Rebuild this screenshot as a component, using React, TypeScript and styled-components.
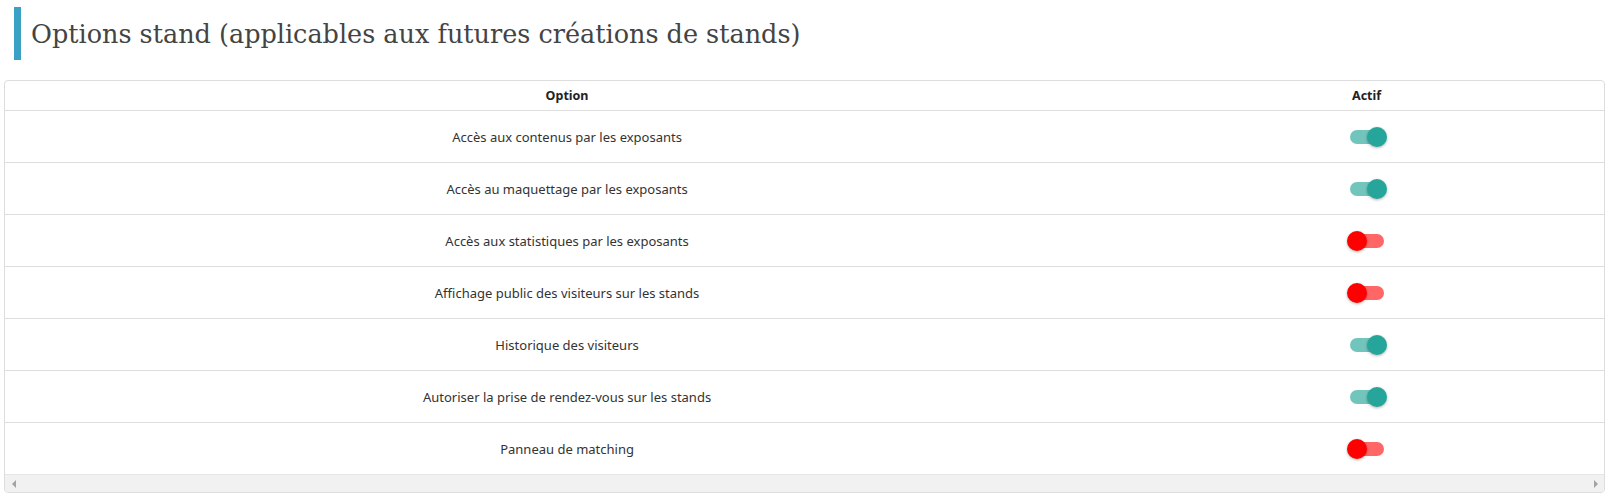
import React from 'react';
import styled, { createGlobalStyle } from 'styled-components';

const GlobalStyle = createGlobalStyle`
  html, body {
    margin: 0;
    padding: 0;
    background: #ffffff;
  }
  body {
    font-family: 'Noto Sans', 'Open Sans', sans-serif;
    color: #333333;
  }
`;

const Page = styled.div`
  padding: 7px 9px 0 4px;
  width: 1614px;
  box-sizing: border-box;
`;

const TitleBar = styled.div`
  display: flex;
  align-items: center;
  height: 53px;
  margin-left: 10px;
  border-left: 7px solid #3aa0c4;
  padding-left: 10px;
  margin-bottom: 20px;
`;

const Title = styled.h1`
  margin: 0;
  font-family: 'DejaVu Serif', 'Liberation Serif', serif;
  font-weight: 300;
  font-size: 25.5px;
  color: #444444;
  white-space: nowrap;
`;

const TableBox = styled.div`
  border: 1px solid #dddddd;
  border-radius: 4px;
  overflow: hidden;
  background: #ffffff;
`;

const Table = styled.table`
  width: 100%;
  border-collapse: collapse;
  table-layout: fixed;
`;

const HeadCell = styled.th<{ $width?: string }>`
  width: ${p => p.$width || 'auto'};
  height: 29px;
  padding: 0;
  font-size: 12.5px;
  font-weight: 700;
  color: #222222;
  text-align: center;
  border-bottom: 1px solid #dddddd;
`;

const Row = styled.tr`
  & + & td {
    border-top: 1px solid #dddddd;
  }
`;

const Cell = styled.td`
  height: 51px;
  padding: 0;
  font-size: 13px;
  text-align: center;
  vertical-align: middle;
  color: #333333;
`;

const Switch = styled.span<{ $on: boolean }>`
  position: relative;
  display: block;
  margin: 0 auto;
  width: 34px;
  height: 14px;
  border-radius: 7px;
  background: ${p => (p.$on ? 'rgba(38, 166, 154, 0.65)' : 'rgba(255, 0, 0, 0.6)')};

  &::after {
    content: '';
    position: absolute;
    top: -3px;
    left: ${p => (p.$on ? '17px' : '-3px')};
    width: 20px;
    height: 20px;
    border-radius: 50%;
    background: ${p => (p.$on ? '#26a69a' : '#ff0000')};
    box-shadow: 0 1px 3px rgba(0, 0, 0, 0.3);
  }
`;

const Scrollbar = styled.div`
  display: flex;
  align-items: center;
  justify-content: space-between;
  height: 17px;
  background: #f1f1f1;
  border-top: 1px solid #e6e6e6;
  padding: 0 6px 0 7px;
`;

const Arrow = styled.span<{ $dir: 'left' | 'right' }>`
  width: 0;
  height: 0;
  border-top: 4px solid transparent;
  border-bottom: 4px solid transparent;
  ${p =>
    p.$dir === 'left'
      ? 'border-right: 4px solid #a3a3a3;'
      : 'border-left: 4px solid #a3a3a3;'}
`;

const options = [
  { label: 'Accès aux contenus par les exposants', on: true },
  { label: 'Accès au maquettage par les exposants', on: true },
  { label: 'Accès aux statistiques par les exposants', on: false },
  { label: 'Affichage public des visiteurs sur les stands', on: false },
  { label: 'Historique des visiteurs', on: true },
  { label: 'Autoriser la prise de rendez-vous sur les stands', on: true },
  { label: 'Panneau de matching', on: false },
];

const App = () => {
  return (
    <>
      <GlobalStyle />
      <Page>
        <TitleBar>
          <Title>Options stand (applicables aux futures créations de stands)</Title>
        </TitleBar>
        <TableBox>
          <Table>
            <thead>
              <tr>
                <HeadCell $width="70.3%">Option</HeadCell>
                <HeadCell>Actif</HeadCell>
              </tr>
            </thead>
            <tbody>
              {options.map((opt, index) => (
                <Row key={index}>
                  <Cell>{opt.label}</Cell>
                  <Cell>
                    <Switch $on={opt.on} />
                  </Cell>
                </Row>
              ))}
            </tbody>
          </Table>
          <Scrollbar>
            <Arrow $dir="left" />
            <Arrow $dir="right" />
          </Scrollbar>
        </TableBox>
      </Page>
    </>
  );
};

export default App;
